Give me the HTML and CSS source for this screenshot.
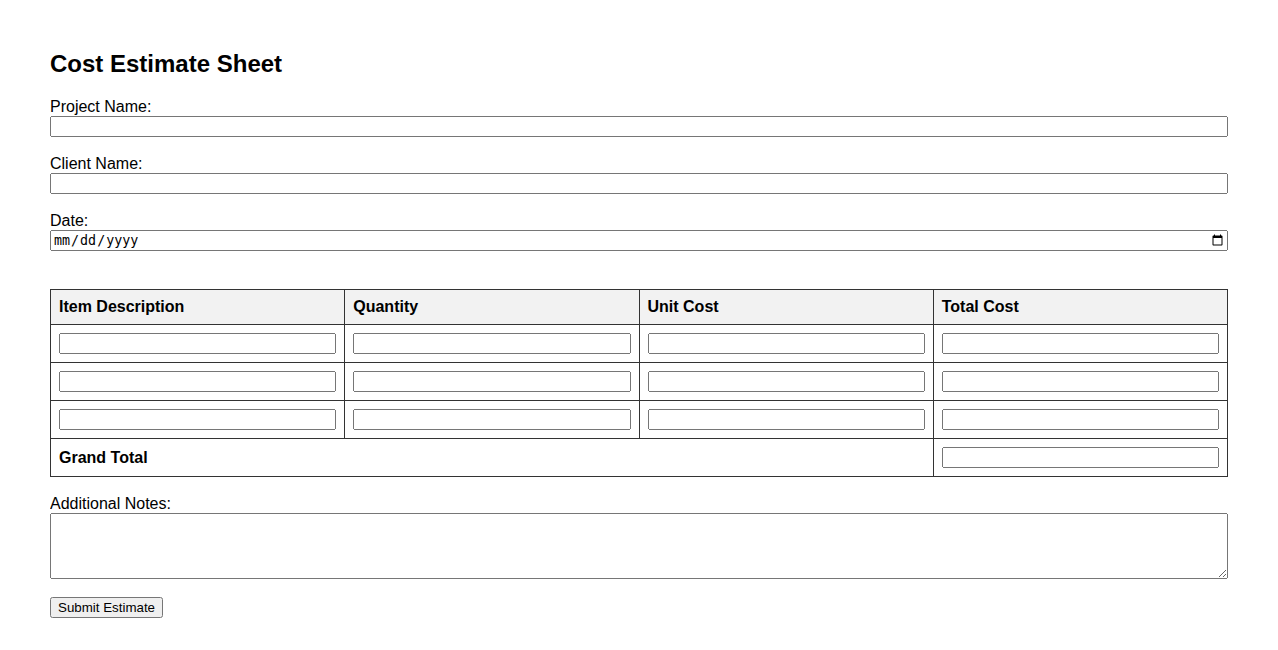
FILE: index.html
```html
<!DOCTYPE html>
<html lang="en">
<head>
<meta charset="utf-8">
<title>Cost Estimate Sheet</title>
<link rel="stylesheet" href="styles.css">
</head>
<body>
<h2 class="title">Cost Estimate Sheet</h2>
<form class="estimate-form">
  <div class="field">
    <label for="project">Project Name:</label>
    <input class="text-input" type="text" id="project">
  </div>
  <div class="field">
    <label for="client">Client Name:</label>
    <input class="text-input" type="text" id="client">
  </div>
  <div class="field">
    <label for="date">Date:</label>
    <input class="text-input" type="date" id="date">
  </div>

  <table class="cost-table">
    <thead>
      <tr>
        <th>Item Description</th>
        <th>Quantity</th>
        <th>Unit Cost</th>
        <th>Total Cost</th>
      </tr>
    </thead>
    <tbody>
      <tr>
        <td><input class="cell-input" type="text"></td>
        <td><input class="cell-input" type="text"></td>
        <td><input class="cell-input" type="text"></td>
        <td><input class="cell-input" type="text"></td>
      </tr>
      <tr>
        <td><input class="cell-input" type="text"></td>
        <td><input class="cell-input" type="text"></td>
        <td><input class="cell-input" type="text"></td>
        <td><input class="cell-input" type="text"></td>
      </tr>
      <tr>
        <td><input class="cell-input" type="text"></td>
        <td><input class="cell-input" type="text"></td>
        <td><input class="cell-input" type="text"></td>
        <td><input class="cell-input" type="text"></td>
      </tr>
      <tr>
        <td colspan="3" class="grand-label">Grand Total</td>
        <td><input class="cell-input" type="text"></td>
      </tr>
    </tbody>
  </table>

  <div class="field">
    <label for="notes">Additional Notes:</label>
    <textarea class="notes" id="notes" rows="4"></textarea>
  </div>

  <button type="submit" class="submit-btn">Submit Estimate</button>
</form>
</body>
</html>
```

FILE: styles.css
```css
* {
  box-sizing: border-box;
}

body {
  margin: 50px;
  font-family: "Liberation Sans", Arial, sans-serif;
  font-size: 16px;
  color: #000;
  background: #fff;
}

.title {
  margin: 0 0 20px 0;
  font-size: 24px;
  font-weight: bold;
}

.field {
  margin-bottom: 18px;
}

.field label {
  display: block;
}

.text-input {
  display: block;
  width: 100%;
  height: 21px;
  margin: 0;
}

.cost-table {
  width: 100%;
  table-layout: fixed;
  border-collapse: collapse;
  margin: 38px 0 18px 0;
}

.cost-table th,
.cost-table td {
  border: 1px solid #333;
  padding: 8px;
  text-align: left;
  vertical-align: middle;
}

.cost-table th {
  background: #f2f2f2;
  font-weight: bold;
}

.grand-label {
  font-weight: bold;
}

.cell-input {
  display: block;
  width: 100%;
  height: 21px;
  margin: 0;
}

.notes {
  display: block;
  width: 100%;
  height: 66px;
  margin: 0;
}

.submit-btn {
  font-family: "Liberation Sans", Arial, sans-serif;
  font-size: 13.33px;
  height: 21px;
  padding: 1px 6px;
}
```
